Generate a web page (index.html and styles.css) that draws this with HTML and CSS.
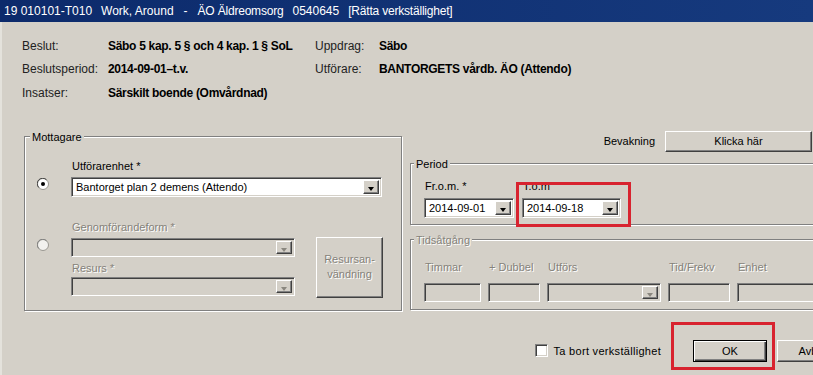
FILE: index.html
```html
<!DOCTYPE html>
<html lang="sv">
<head>
  <meta charset="UTF-8" />
  <title>Rätta verkställighet</title>
  <link rel="stylesheet" href="styles.css">
</head>
<body>
<div class="window">
  <div class="titlebar">
    <span>19 010101-T010</span>
    <span>Work, Around</span>
    <span>-</span>
    <span>ÄO Äldreomsorg</span>
    <span>0540645</span>
    <span>[Rätta verkställighet]</span>
  </div>

  <div class="dialog">
    <div class="info">
      <span class="lbl">Beslut:</span><span class="val">Säbo 5 kap. 5 § och 4 kap. 1 § SoL</span>
      <span class="lbl">Uppdrag:</span><span class="val">Säbo</span>
      <span class="lbl">Beslutsperiod:</span><span class="val">2014-09-01–t.v.</span>
      <span class="lbl">Utförare:</span><span class="val">BANTORGETS vårdb. ÄO (Attendo)</span>
      <span class="lbl">Insatser:</span><span class="val">Särskilt boende (Omvårdnad)</span>
    </div>

    <div class="main">
      <fieldset class="group mottagare">
        <legend>Mottagare</legend>

        <div class="opt opt-first">
          <svg class="radio radio-a" width="12" height="12" viewBox="0 0 12 12">
            <circle cx="6" cy="6" r="5.5" fill="#fff" stroke="#9a9891"/>
            <path d="M1.8 9.5A5 5 0 0 1 9.5 1.8" fill="none" stroke="#404040"/>
            <circle cx="6" cy="6" r="2" fill="#000"/>
          </svg>
          <div class="col col-wide">
            <div class="flabel">Utförarenhet *</div>
            <div class="field">
              <span class="ftext">Bantorget plan 2 demens (Attendo)</span>
              <span class="arrow"></span>
            </div>
          </div>
        </div>

        <div class="opt opt-second">
          <svg class="radio radio-b" width="12" height="12" viewBox="0 0 12 12">
            <circle cx="6" cy="6" r="5.5" fill="#f2f1ee" stroke="#9a9891"/>
            <path d="M1.8 9.5A5 5 0 0 1 9.5 1.8" fill="none" stroke="#808080"/>
          </svg>
          <div class="col col-narrow">
            <div class="flabel off">Genomförandeform *</div>
            <div class="field field-off small">
              <span class="ftext"></span>
              <span class="arrow"></span>
            </div>
            <div class="flabel off resurs">Resurs *</div>
            <div class="field field-off small tight">
              <span class="ftext"></span>
              <span class="arrow"></span>
            </div>
          </div>
          <div class="btn resurs-btn off">Resursan-<br>vändning</div>
        </div>
      </fieldset>

      <div class="side">
        <div class="bevakning">
          <span>Bevakning</span>
          <div class="btn klicka">Klicka här</div>
        </div>

        <fieldset class="group period">
          <legend>Period</legend>
          <div class="date-row">
            <div class="date-col">
              <div class="flabel">Fr.o.m. *</div>
              <div class="field date-from">
                <span class="ftext">2014-09-01</span>
                <span class="arrow"></span>
              </div>
            </div>
            <div class="date-col">
              <div class="flabel">T.o.m</div>
              <div class="field date-to">
                <span class="ftext">2014-09-18</span>
                <span class="arrow"></span>
              </div>
            </div>
          </div>
        </fieldset>

        <fieldset class="group tids">
          <legend class="off">Tidsåtgång</legend>
          <div class="tids-row">
            <div class="tcol w-timmar">
              <div class="flabel off">Timmar</div>
              <div class="field field-off small"></div>
            </div>
            <div class="tcol w-dubbel">
              <div class="flabel off">+ Dubbel</div>
              <div class="field field-off small"></div>
            </div>
            <div class="tcol w-utfors">
              <div class="flabel off">Utförs</div>
              <div class="field field-off small">
                <span class="ftext"></span>
                <span class="arrow"></span>
              </div>
            </div>
            <div class="tcol w-tid">
              <div class="flabel off">Tid/Frekv</div>
              <div class="field field-off small"></div>
            </div>
            <div class="tcol w-enhet">
              <div class="flabel off">Enhet</div>
              <div class="field field-off small"></div>
            </div>
          </div>
        </fieldset>
      </div>
    </div>

    <div class="actions">
      <label class="check"><span class="box"></span>Ta bort verkställighet</label>
      <div class="btn btn-default ok">OK</div>
      <div class="btn cancel">Avbryt</div>
    </div>
  </div>

  <!-- red annotation marks -->
  <div class="mark mark-tom"></div>
  <div class="mark mark-ok"></div>
</div>
</body>
</html>
```

FILE: styles.css
```css
body {
  margin: 0;
  background: #d4d0c8;
  font-family: "Liberation Sans", Arial, sans-serif;
  font-size: 12px;
  color: #000;
  overflow: hidden;
}
.window {
  position: relative;
  width: 813px;
  height: 375px;
  overflow: hidden;
  box-shadow: inset 2px 0 0 #e4e2dc;
}
.titlebar {
  display: flex;
  gap: 9px;
  height: 22px;
  line-height: 22px;
  padding-left: 4px;
  background: linear-gradient(to right, #0c2a6b, #163a7e);
  color: #fff;
  font-size: 12px;
  white-space: nowrap;
}
.titlebar span:nth-child(3) {
  padding: 0 1px;
}
.titlebar span:nth-child(4),
.titlebar span:nth-child(6) {
  letter-spacing: -0.2px;
}
.dialog {
  padding-left: 22px;
}
.info {
  display: grid;
  grid-template-columns: 86px 207px 64px auto;
  grid-auto-rows: 23.5px;
  align-items: center;
  margin-top: 12px;
}
.lbl {
  color: #222;
}
.val {
  font-weight: bold;
  letter-spacing: -0.3px;
  white-space: nowrap;
}
.main {
  display: flex;
  align-items: flex-start;
  margin-top: 25px;
  font-size: 11px;
}

/* group boxes */
.group {
  margin: 0;
  padding: 0;
  min-width: 0;
  border: 1px solid #808080;
  box-shadow: 1px 1px 0 #fff, inset 1px 1px 0 #fff;
}
.group legend {
  padding: 0 2px;
  margin-left: 5px;
  line-height: 14px;
  background: #d4d0c8;
}
.mottagare {
  width: 378px;
  box-sizing: border-box;
  margin-left: 2px;
  padding-bottom: 12px;
}
.opt {
  display: flex;
}
.opt-first {
  padding-top: 15px;
}
.opt-second {
  margin-top: 23px;
}
.radio {
  flex: none;
  margin: 0 22px 0 12px;
}
.radio-a {
  align-self: flex-end;
  margin-bottom: 7px;
}
.radio-b {
  align-self: flex-start;
  margin-top: 19px;
}
.col-wide {
  width: 311px;
}
.col-narrow {
  width: 224px;
}
.flabel {
  line-height: 14px;
  margin-bottom: 4px;
  padding-left: 1px;
  white-space: nowrap;
}
.off {
  color: #85827a;
  text-shadow: 1px 1px 0 #fff;
}
.resurs {
  margin-top: 4px;
}
.tight {
  margin-top: -2px;
}

/* sunken fields */
.field {
  display: flex;
  height: 20px;
  box-sizing: border-box;
  background: #fff;
  border: 1px solid;
  border-color: #808080 #fff #fff #808080;
  box-shadow: inset 1px 1px 0 #404040, inset -1px -1px 0 #d4d0c8;
  padding: 2px;
}
.field.small {
  height: 19px;
}
.field-off {
  background: #d4d0c8;
}
.ftext {
  flex: 1;
  line-height: 15px;
  padding-left: 2px;
  white-space: nowrap;
  overflow: hidden;
}
.arrow {
  flex: none;
  position: relative;
  width: 16px;
  box-sizing: border-box;
  background: #d4d0c8;
  border: 1px solid;
  border-color: #fff #404040 #404040 #fff;
  box-shadow: inset -1px -1px 0 #808080;
}
.arrow::before {
  content: "";
  position: absolute;
  left: 4px;
  top: 6px;
  border-left: 3.5px solid transparent;
  border-right: 3.5px solid transparent;
  border-top: 4px solid #000;
}
.field-off .arrow::before {
  border-top-color: #8a877f;
}

/* raised buttons */
.btn {
  box-sizing: border-box;
  background: #d4d0c8;
  border: 1px solid;
  border-color: #fff #404040 #404040 #fff;
  box-shadow: inset -1px -1px 0 #808080;
  text-align: center;
}
.resurs-btn {
  flex: none;
  width: 67px;
  height: 61px;
  margin: 17px 0 0 21px;
  padding-top: 14px;
  line-height: 15px;
}

.side {
  width: 403px;
  margin-left: 8px;
  margin-top: 1px;
}
.bevakning {
  display: flex;
  justify-content: flex-end;
  align-items: center;
  gap: 10px;
  height: 21px;
}
.klicka {
  width: 147px;
  height: 21px;
  line-height: 19px;
  margin-right: 1px;
}
.period {
  margin: 5px -20px 0 0;
  padding: 8px 0 6px 13px;
}
.period legend,
.tids legend {
  margin-left: -10px;
}
.date-row {
  display: flex;
  gap: 8px;
}
.date-col .flabel {
  margin-bottom: 5px;
}
.date-from {
  width: 90px;
}
.date-to {
  width: 99px;
}
.tids {
  margin: 8px -20px 0 0;
  padding: 13px 0 7px 13px;
}
.tids-row {
  display: flex;
  gap: 7px;
}
.tcol .flabel {
  margin-bottom: 9px;
}
.w-timmar { width: 57px; }
.w-dubbel { width: 52px; }
.w-utfors { width: 114px; }
.w-tid { width: 62px; }
.w-enhet { width: 80px; }

.actions {
  display: flex;
  justify-content: flex-end;
  align-items: center;
  margin: 29px -38px 0 0;
  font-size: 11px;
}
.check {
  display: flex;
  align-items: center;
  letter-spacing: 0.3px;
}
.box {
  width: 13px;
  height: 13px;
  box-sizing: border-box;
  margin-right: 6px;
  background: #fff;
  border: 1px solid;
  border-color: #808080 #fff #fff #808080;
  box-shadow: inset 1px 1px 0 #404040, inset -1px -1px 0 #d4d0c8;
}
.ok, .cancel {
  width: 74px;
  height: 22px;
  line-height: 20px;
}
.ok {
  margin-left: 32px;
}
.cancel {
  margin-left: 10px;
}
.btn-default {
  border: 1px solid #000;
  box-shadow: inset 1px 1px 0 #fff, inset -1px -1px 0 #404040, inset -2px -2px 0 #808080;
}

.mark {
  position: absolute;
  box-sizing: border-box;
  border: 3px solid #d8232f;
}
.mark-tom {
  left: 516px;
  top: 182px;
  width: 115px;
  height: 45px;
}
.mark-ok {
  left: 671px;
  top: 322px;
  width: 104px;
  height: 48px;
}
```
